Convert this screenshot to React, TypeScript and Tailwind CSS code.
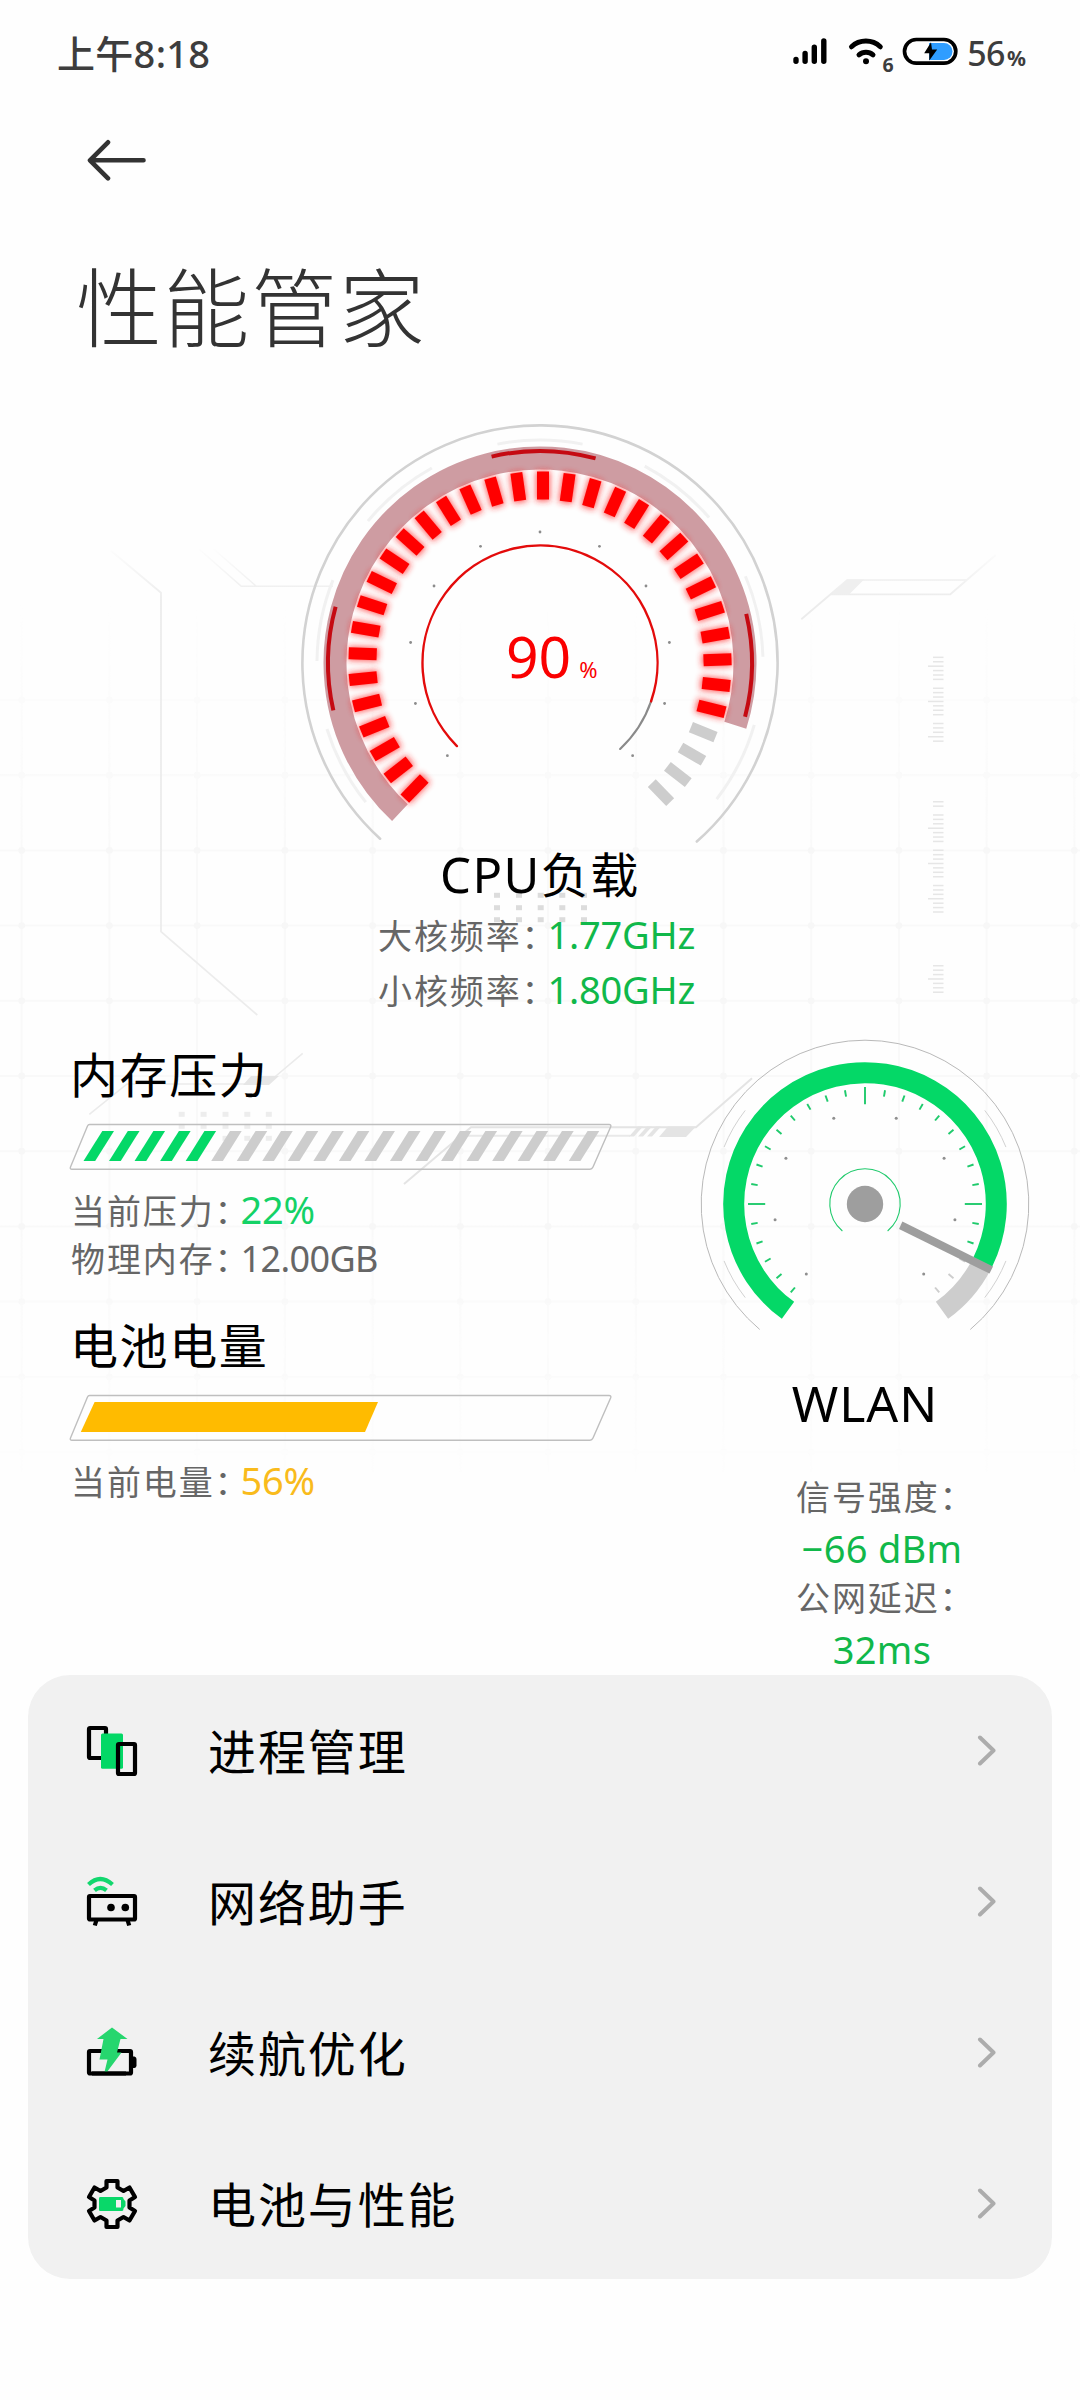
import React from "react";

const rad = (deg: number) => (deg * Math.PI) / 180;

/** Arc path; angles in degrees, clockwise, 0 = right. */
function arc(cx: number, cy: number, r: number, from: number, to: number) {
  const x1 = cx + r * Math.cos(rad(from));
  const y1 = cy + r * Math.sin(rad(from));
  const x2 = cx + r * Math.cos(rad(to));
  const y2 = cy + r * Math.sin(rad(to));
  const large = to - from > 180 ? 1 : 0;
  return `M${x1.toFixed(2)} ${y1.toFixed(2)}A${r} ${r} 0 ${large} 1 ${x2.toFixed(2)} ${y2.toFixed(2)}`;
}

const range = (n: number) => Array.from({ length: n }, (_, i) => i);

function TickGroup({ y, count, long, skip }: { y: number; count: number; long: number; skip: number }) {
  return (
    <>
      {range(count).map((i) => {
        if (i % 8 === skip) return null;
        const isLong = i % 8 === long;
        return (
          <rect
            key={i}
            x={isLong ? 928 : 933}
            y={y - 0.7 + i * 4.41}
            width={isLong ? 15.5 : 10.5}
            height={1.5}
            fill="#e6e6e6"
          />
        );
      })}
    </>
  );
}

function Backdrop() {
  const cols = range(13).map((i) => 21.7 + i * 87.72);
  const rows = range(11).map((i) => 700 + i * 75.2);
  return (
    <svg className="absolute left-0 top-0 h-[1675px] w-[1080px]" viewBox="0 0 1080 1675" fill="none">
      <defs>
        <linearGradient id="gridFade" x1="0" y1="600" x2="0" y2="1475" gradientUnits="userSpaceOnUse">
          <stop offset="0" stopColor="#fff" stopOpacity="0" />
          <stop offset="0.3" stopColor="#fff" />
          <stop offset="0.7" stopColor="#fff" />
          <stop offset="1" stopColor="#fff" stopOpacity="0.1" />
        </linearGradient>
        <mask id="gridMask" maskUnits="userSpaceOnUse" x="0" y="600" width="1080" height="875">
          <rect x="0" y="600" width="1080" height="875" fill="url(#gridFade)" />
        </mask>
        <linearGradient id="lineFade" x1="0" y1="545" x2="0" y2="600" gradientUnits="userSpaceOnUse">
          <stop offset="0" stopColor="#ececec" stopOpacity="0" />
          <stop offset="1" stopColor="#ececec" />
        </linearGradient>
      </defs>
      <g mask="url(#gridMask)">
        {cols.map((x) => (
          <path key={x} d={`M${x} 600V1472`} stroke="#f9f9f9" strokeWidth="2" />
        ))}
        {rows.map((y) => (
          <path key={y} d={`M0 ${y}H1080`} stroke="#f9f9f9" strokeWidth="2" />
        ))}
        {rows.map((y) => cols.map((x) => <circle key={`${x}-${y}`} cx={x} cy={y} r="3.4" fill="#f7f7f7" />))}
      </g>
      <path d="M111 550.7L161 592.7V931.7L257.3 1015" stroke="url(#lineFade)" strokeWidth="1.8" />
      <path d="M199 549L241.3 586.3H333M213.7 549L256 586" stroke="url(#lineFade)" strokeWidth="1.6" />
      <path d="M801.3 619.3L847.3 580H966.7M831 594.3H950.3L995.7 555" stroke="url(#lineFade)" strokeWidth="1.8" />
      <path d="M847 579.5H864L849 594.5H831Z" fill="#efefef" />
      <TickGroup y={657.3} count={20} long={2} skip={6} />
      <TickGroup y={801.7} count={26} long={6} skip={2} />
      <TickGroup y={965.7} count={7} long={3} skip={7} />
      {[497, 519, 540.7, 562.3, 584].map((x) =>
        [895.3, 907.7, 919.7].map((y) => (
          <rect key={`${x}-${y}`} x={x - 3} y={y - 2.5} width="6" height="5" fill="#dcdcdc" />
        )),
      )}
      {[181.7, 203.6, 225.5, 247.3, 268.8].map((x) =>
        [1114.3, 1126.3, 1138.3].map((y) => (
          <rect key={`${x}-${y}`} x={x - 3} y={y - 2.5} width="6" height="5" fill="#ededed" />
        )),
      )}
      <path d="M89.3 1114.3L127 1084H245M270 1081L302.7 1053.3" stroke="#ebebeb" strokeWidth="1.6" />
      <path d="M251 1076H279L269 1085H243Z" fill="#e6e6e6" />
      <path d="M404 1184L471 1127.3H696L752 1078.3" stroke="#e4e4e4" strokeWidth="2" />
      <path d="M461 1135.7H630" stroke="#e9e9e9" strokeWidth="2" />
      <path d="M638 1126.5H643L634 1136.5H629ZM647 1126.5H652L643 1136.5H638ZM656 1126.5H661L652 1136.5H647ZM668 1126.5H696L686 1137H659Z" fill="#e4e4e4" />
    </svg>
  );
}

function StatusBar() {
  return (
    <header className="flex h-[106px] shrink-0 items-center justify-between pl-[57px] pr-[55px] text-[#3d3d3d]">
      <div className="text-[38px] font-medium leading-[56px] tracking-[0.3px]">上午8:18</div>
      <div className="flex items-center">
        <svg className="h-[60px] w-[175px]" viewBox="785 23 175 60" fill="none">
          <path d="M796 59.5V61.3M805.1 53.4V61.3M814.3 47.3V61.3M823.8 41V61.3" stroke="#000" strokeWidth="5.4" strokeLinecap="round" />
          <path d="M851.5 46.8A21 21 0 0 1 880.3 46.8" stroke="#000" strokeWidth="5" strokeLinecap="round" />
          <path d="M859 54.8A10.5 10.5 0 0 1 873 54.8" stroke="#000" strokeWidth="5" strokeLinecap="round" />
          <circle cx="866" cy="61.3" r="3" fill="#000" />
          <text x="882.5" y="71.6" fontSize="19.5" fontWeight="700" fill="#3d3d3d">6</text>
          <rect x="904.5" y="39.5" width="51.3" height="23.7" rx="11.85" stroke="#000" strokeWidth="3.7" />
          <path d="M929 43H944A8.5 8.5 0 0 1 944 60H929Z" fill="#2f9dff" />
          <path d="M931 42.3L924.2 53.3H929.3L929.3 60.5L937.2 49.6H932Z" fill="#000" />
        </svg>
        <div className="flex items-baseline pl-[7px]">
          <span className="text-[34px] font-medium leading-[48px] tracking-[-0.5px]">56</span>
          <span className="pl-[2px] text-[21px] font-bold leading-none tracking-[-1px]">%</span>
        </div>
      </div>
    </header>
  );
}

function CpuGauge() {
  const cx = 250;
  const cy = 241;
  const outerMarks: [number, number][] = [
    [-101, -79],
    [-62, -40.7],
    [-22.9, -1.6],
    [16.1, 37.6],
    [219.5, 241],
    [180.5, 201.8],
    [141.4, 162.8],
  ];
  return (
    <div className="relative h-[424px] w-[500px]">
      <svg className="h-[424px] w-[500px]" viewBox="0 0 500 424" fill="none">
        <defs>
          <filter id="glow" x="-20%" y="-20%" width="140%" height="140%">
            <feGaussianBlur stdDeviation="3.2" />
          </filter>
        </defs>
        <path d={arc(cx, cy, 237.6, 132.3, 408.7)} stroke="#d2d2d2" strokeWidth="2.6" strokeLinecap="round" />
        {outerMarks.map(([a, b]) => (
          <path key={a} d={arc(cx, cy, 223, a, b)} stroke="#f1f1f1" strokeWidth="3" />
        ))}
        <path d={arc(cx, cy, 205, 133.1, 377.7)} stroke="#ce9ca2" strokeWidth="23" />
        <path d={arc(cx, cy, 212, 167.1, 195.4)} stroke="#c50a12" strokeWidth="4" />
        <path d={arc(cx, cy, 212, 256.8, 285.2)} stroke="#c50a12" strokeWidth="4" />
        <path d={arc(cx, cy, 212, -13.4, 14.7)} stroke="#c50a12" strokeWidth="4" />
        <g fill="#ff2020" opacity="0.75" filter="url(#glow)">
          {range(31).map((i) => (
            <rect key={i} x={cx - 4} y={cy - 192} width="14" height="30" transform={`rotate(${(i - 17) * 8} ${cx} ${cy})`} />
          ))}
        </g>
        {range(35).map((i) => {
          const on = i < 31;
          return (
            <rect
              key={i}
              x={on ? cx - 3 : cx - 2.5}
              y={on ? cy - 191.5 : cy - 190.5}
              width={on ? 12 : 11}
              height={on ? 28 : 26.5}
              fill={on ? "#ff0000" : "#cdcdcd"}
              transform={`rotate(${(i - 17) * 8} ${cx} ${cy})`}
            />
          );
        })}
        {range(11).map((i) => {
          const a = rad(-90 + (i - 5) * 27);
          return <circle key={i} cx={cx + 131 * Math.cos(a)} cy={cy + 131 * Math.sin(a)} r="1.4" fill="#8c8c8c" />;
        })}
        <path d={arc(cx, cy, 117.5, 19, 47)} stroke="#8a8a8a" strokeWidth="2.2" strokeLinecap="round" />
        <path d={arc(cx, cy, 117.5, 135, 379)} stroke="#e30b0b" strokeWidth="2.4" strokeLinecap="round" />
      </svg>
      <div className="absolute left-[216px] top-[194px] flex items-baseline text-[#fa0000]">
        <span className="text-[57px] leading-[80px]">90</span>
        <span className="pl-[8px] text-[22px] leading-none">%</span>
      </div>
    </div>
  );
}

function WlanGauge() {
  const cx = 200;
  const cy = 168;
  const angles = range(29).map((i) => (i - 14) * 10);
  return (
    <svg className="h-[300px] w-[400px]" viewBox="0 0 400 300" fill="none">
      <path d={arc(cx, cy, 163.8, 130, 410)} stroke="#b9b9b9" strokeWidth="1" />
      {[22, 142, 202, 322].map((a) => (
        <path key={a} d={arc(cx, cy, 152, a, a + 16)} stroke="#d2d2d2" strokeWidth="1" />
      ))}
      <path d={arc(cx, cy, 131.3, 26, 54.1)} stroke="#cdcdcd" strokeWidth="21" />
      <path d={arc(cx, cy, 131.3, 125.9, 386.5)} stroke="#04d867" strokeWidth="21" />
      {angles.map((a) => {
        const major = a % 90 === 0;
        return (
          <path
            key={a}
            d={major ? `M${cx} ${cy - 117}V${cy - 99.8}` : `M${cx} ${cy - 115.5}V${cy - 109}`}
            stroke={a > 110 ? "#cdcdcd" : "#1fca6c"}
            strokeWidth={1.9}
            transform={`rotate(${a} ${cx} ${cy})`}
          />
        );
      })}
      {[-140, -100, -60, -20, 20, 60, 100, 140].map((a) => (
        <circle
          key={a}
          cx={cx + 91.3 * Math.sin(rad(a))}
          cy={cy - 91.3 * Math.cos(rad(a))}
          r="1.5"
          fill="#8f8f8f"
        />
      ))}
      <path d={arc(cx, cy, 35.2, 130, 410)} stroke="#1fca6c" strokeWidth="1.1" />
      <circle cx={cx} cy={cy} r="18.2" fill="#9e9e9e" />
      <path d="M237.4 185.5L328 230.5L324.5 237.6L234 193Z" fill="#9e9e9e" />
    </svg>
  );
}

function MeterFrame({ children }: { children: React.ReactNode }) {
  return (
    <svg className="ml-[60px] h-[48px] w-[560px]" viewBox="60 0 560 48" fill="none">
      <path d="M89.5 1.5H609Q611.5 1.5 610.6 4L593 44Q592 46.2 590 46.2H72Q69.6 46.2 70.6 43.7L87.5 3Q88.2 1.5 89.5 1.5Z" stroke="#bfbfbf" strokeWidth="1.4" />
      {children}
    </svg>
  );
}

type StatProps = { label: string; value: string; tone: string; size?: string; height?: string };

function Stat({ label, value, tone, size = "text-[38px] tracking-[-0.2px]", height = "h-[49px] leading-[49px]" }: StatProps) {
  return (
    <div className={`flex items-baseline whitespace-nowrap ${height}`}>
      <span className="w-[169.5px] text-[34px] tracking-[1.9px] text-[#666] [font-feature-settings:'halt']">{label}</span>
      <span className={`${size} ${tone}`}>{value}</span>
    </div>
  );
}

function ProcessIcon() {
  return (
    <svg className="size-[52px]" viewBox="0 0 52 52" fill="none">
      <rect x="3" y="3" width="17" height="30" rx="1" stroke="#000" strokeWidth="4.2" />
      <rect x="15" y="8.5" width="22" height="35.3" rx="1.5" fill="#03d866" />
      <rect x="32" y="19" width="17" height="30" rx="1" stroke="#000" strokeWidth="4.2" />
    </svg>
  );
}

function NetworkIcon() {
  return (
    <svg className="size-[52px]" viewBox="0 0 52 52" fill="none">
      <path d="M2.5 8.5Q14.2 -2.5 26.5 8.5" stroke="#12d76e" strokeWidth="4.2" />
      <path d="M8.5 14.3Q14.5 9.3 20.5 14.3" stroke="#12d76e" strokeWidth="4.2" />
      <rect x="3" y="20" width="46" height="23.5" rx="1" stroke="#000" strokeWidth="4.2" />
      <circle cx="25" cy="31.5" r="3.8" fill="#000" />
      <circle cx="39.3" cy="31.5" r="3.8" fill="#000" />
      <path d="M10.5 44L8.8 49.5M41.5 44L43.2 49.5" stroke="#000" strokeWidth="4.2" />
    </svg>
  );
}

function EnduranceIcon() {
  return (
    <svg className="size-[52px]" viewBox="0 0 52 52" fill="none">
      <rect x="3" y="24" width="42" height="22.5" rx="1" stroke="#000" strokeWidth="4.2" />
      <path d="M47 29.5H48.5Q50.5 30 50.5 32V38.5Q50.5 40.5 48.5 41H46Z" fill="#000" />
      <path d="M26 0.5L41.5 12H34.5L31 25.5H35.5L21 45H18.5L21.5 32.5H13.5L17.5 12H11Z" fill="#26d66e" />
      <path d="M20 44.5H40V48.6H6V44.5Z" fill="#000" />
    </svg>
  );
}

function GearBatteryIcon() {
  return (
    <svg className="size-[52px]" viewBox="0 0 52 52" fill="none">
      <path
        d="M20.5 3H31.5V9.5L37.5 13L43.5 9.5L49 19L43.5 22.5V29.5L49 33L43.5 42.5L37.5 39L31.5 42.5V49H20.5V42.5L14.5 39L8.5 42.5L3 33L8.5 29.5V22.5L3 19L8.5 9.5L14.5 13L20.5 9.5Z"
        stroke="#000"
        strokeWidth="4.2"
        strokeLinejoin="round"
      />
      <path d="M14 19H36Q37.5 19 37.5 21L39.5 23.5V28L37.5 30.5Q37.5 33 36 33H14Q13 33 13 31.5V20.5Q13 19 14 19Z" fill="#09d869" />
      <rect x="30" y="22" width="5" height="7.5" fill="#f1f1f1" />
    </svg>
  );
}

const menu = [
  { label: "进程管理", Icon: ProcessIcon },
  { label: "网络助手", Icon: NetworkIcon },
  { label: "续航优化", Icon: EnduranceIcon },
  { label: "电池与性能", Icon: GearBatteryIcon },
];

export default function App() {
  return (
    <div className="relative flex h-[2400px] w-[1080px] flex-col overflow-hidden bg-[#fefefe] font-['Noto_Sans','Noto_Sans_CJK_SC',sans-serif] text-black">
      <Backdrop />
      <div className="relative flex flex-1 flex-col">
        <StatusBar />
        <nav className="flex h-[108px] items-center pl-[87px]">
          <svg className="h-[44px] w-[60px]" viewBox="0 0 60 44" fill="none">
            <path d="M56.5 22.3H3.5M21 4.3L3 22.3L21 40.3" stroke="#333" strokeWidth="4.6" strokeLinecap="round" strokeLinejoin="round" />
          </svg>
        </nav>
        <h1 className="flex h-[188px] items-center pb-[2px] pl-[76px] text-[86px] font-light tracking-[1.6px] text-[#333]">性能管家</h1>

        <section className="flex h-[616px] flex-col items-center pt-[20px]">
          <CpuGauge />
          <h2 className="h-[61px] text-[48px] leading-[56px]">
            <span className="text-[49px] tracking-[1.4px]">CPU</span>
            <span className="tracking-[1.6px]">负载</span>
          </h2>
          <div className="w-[324px]">
            <Stat label="大核频率：" value="1.77GHz" tone="text-[#10b84a]" height="h-[55px] leading-[55px]" />
            <Stat label="小核频率：" value="1.80GHz" tone="text-[#10b84a]" height="h-[55px] leading-[55px]" />
          </div>
        </section>

        <section className="flex h-[657px]">
          <div className="w-[665px] pt-[29px]">
            <h2 className="pl-[70px] text-[48px] leading-[56px] tracking-[1.6px]">内存压力</h2>
            <div className="mt-[20px] h-[48px]">
              <MeterFrame>
                {range(20).map((i) => {
                  const x = i * 25.54;
                  return (
                    <path
                      key={i}
                      d={`M${102.3 + x} 8H${114 + x}L${95.2 + x} 38H${83.5 + x}Z`}
                      fill={i < 5 ? "#04d867" : "#cdcdcd"}
                    />
                  );
                })}
              </MeterFrame>
            </div>
            <div className="mt-[14px] pl-[71px]">
              <Stat label="当前压力：" value="22%" tone="text-[#14d266]" />
              <Stat label="物理内存：" value="12.00GB" tone="text-[#666]" size="text-[36px] tracking-[-0.6px]" />
            </div>
            <h2 className="mt-[35px] pl-[70px] text-[48px] leading-[56px] tracking-[1.6px]">电池电量</h2>
            <div className="mt-[20px] h-[48px]">
              <MeterFrame>
                <path d="M94.6 8H378L365 38H80.8Z" fill="#ffbb00" />
              </MeterFrame>
            </div>
            <div className="mt-[14px] pl-[71px]">
              <Stat label="当前电量：" value="56%" tone="text-[#f9bb1c]" />
            </div>
          </div>

          <div className="flex w-[400px] flex-col items-center pt-[18px]">
            <WlanGauge />
            <h2 className="mt-[39px] text-[50px] leading-[56px] tracking-[1px]">WLAN</h2>
            <div className="ml-[34px] mt-[41px] flex w-[172px] flex-col items-center whitespace-nowrap text-[38px] leading-[50.5px] tracking-[0.3px] text-[#10b84a]">
              <span className="w-full text-[34px] tracking-[1.9px] text-[#666]">信号强度：</span>
              <span>−66 dBm</span>
              <span className="w-full text-[34px] tracking-[1.9px] text-[#666]">公网延迟：</span>
              <span>32ms</span>
            </div>
          </div>
        </section>

        <ul className="mx-[28px] h-[604px] rounded-[42px] bg-[#f1f1f1]">
          {menu.map(({ label, Icon }) => (
            <li key={label} className="flex h-[151px] items-center pl-[58px] pr-[54px]">
              <Icon />
              <span className="flex-1 pl-[70px] pt-[2px] text-[48px] leading-[64px] tracking-[1.9px]">{label}</span>
              <svg className="h-[32px] w-[22px]" viewBox="0 0 22 32" fill="none">
                <path d="M4 2.5L17.5 15.5L4 28.5" stroke="#acacac" strokeWidth="4" strokeLinecap="round" strokeLinejoin="round" />
              </svg>
            </li>
          ))}
        </ul>
      </div>
    </div>
  );
}
